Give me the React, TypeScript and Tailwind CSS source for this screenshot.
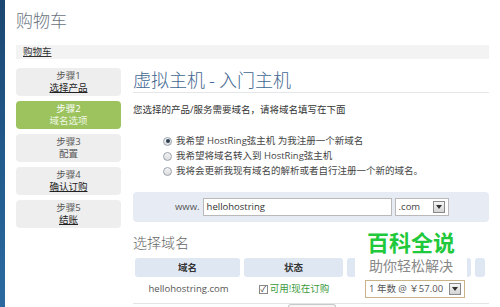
const FONT = { fontFamily: '"Open Sans", "Noto Sans CJK SC", sans-serif' };
const CJK = { fontFamily: '"Noto Sans CJK SC", sans-serif' };

const steps = [
  { n: "步骤1", label: "选择产品", link: true },
  { n: "步骤2", label: "域名选项", active: true },
  { n: "步骤3", label: "配置" },
  { n: "步骤4", label: "确认订购", link: true },
  { n: "步骤5", label: "结账", link: true },
];

function Radio({ checked }: { checked?: boolean }) {
  return (
    <span className="flex h-[9px] w-[9px] shrink-0 items-center justify-center rounded-full border border-[#9aa3ad] bg-gradient-to-b from-[#f4f4f4] to-[#dcdcdc]">
      {checked && <span className="h-[4px] w-[4px] rounded-full bg-[#2d3f55]" />}
    </span>
  );
}

function DropArrow() {
  return (
    <span className="flex h-[12px] w-[12px] shrink-0 items-center justify-center border border-[#8a8a8a] bg-gradient-to-b from-[#f6f6f6] to-[#d4d4d4]">
      <svg width="6" height="4" viewBox="0 0 6 4">
        <path d="M0 0h6L3 4z" fill="#333" />
      </svg>
    </span>
  );
}

export default function App() {
  return (
    <div className="flex h-[307px] w-[500px] overflow-hidden bg-white text-[#333]" style={FONT}>
      <div className="w-[5px] shrink-0 bg-gradient-to-b from-[#1b4670] via-[#215a8c] to-[#2a6aa0]" />
      <div className="flex w-[495px] flex-col bg-white pl-[11px] pr-[11px]">
        <div className="pt-[9px] text-[17px] font-light leading-[22px] text-[#68737e]" style={CJK}>购物车</div>
        <div className="mt-[6px] h-px bg-[#e6e8ea]" />
        <div className="mt-[8px] flex h-[25px] items-center bg-[#f3f3f3] pl-[7px]">
          <span className="text-[9.5px] text-[#333] underline">购物车</span>
        </div>
        <div className="mt-[8px] flex gap-[12px]">
          <div className="flex w-[105px] shrink-0 flex-col gap-[5px] pt-[1px]">
            {steps.map((s) => (
              <div
                key={s.n}
                className={
                  s.active
                    ? "flex h-[28px] flex-col items-center justify-center rounded-[4px] bg-[#9cc35e] text-[9.5px] leading-[12px] text-white"
                    : "flex h-[28px] flex-col items-center justify-center rounded-[4px] bg-[#eeeeee] text-[9.5px] leading-[12px] text-[#555]"
                }
              >
                <span>{s.n}</span>
                <span className={s.link ? "text-[#222] underline" : s.active ? "text-[#eef6e2]" : ""}>{s.label}</span>
              </div>
            ))}
          </div>
          <div className="flex min-w-0 flex-1 flex-col">
            <div className="pt-[1px] text-[18px] font-light leading-[23px] text-[#3f6791]" style={CJK}>虚拟主机 - 入门主机</div>
            <div className="mt-[1px] h-px bg-[#e4e6e8]" />
            <div className="mt-[11px] text-[9.5px] leading-[12px] text-[#333]">您选择的产品/服务需要域名，请将域名填写在下面</div>
            <div className="mt-[19px] flex flex-col gap-[3px] pl-[30px] text-[9.5px] leading-[12px] text-[#444]">
              <label className="flex items-center gap-[4px]">
                <Radio checked />
                <span>我希望 HostRing弦主机 为我注册一个新域名</span>
              </label>
              <label className="flex items-center gap-[4px]">
                <Radio />
                <span>我希望将域名转入到 HostRing弦主机</span>
              </label>
              <label className="flex items-center gap-[4px]">
                <Radio />
                <span>我将会更新我现有域名的解析或者自行注册一个新的域名。</span>
              </label>
            </div>
            <div className="mt-[15px] flex h-[30px] items-center rounded-[4px] bg-[#e6ebf4] pl-[42px]">
              <span className="text-[9.5px] text-[#555]">www.</span>
              <div className="ml-[3px] flex h-[18px] w-[189px] items-center border border-[#b9b9b9] bg-white pl-[3px] text-[9.5px] text-[#333]">
                hellohostring
              </div>
              <div className="ml-[3px] flex h-[18px] w-[54px] items-center justify-between border border-[#b9b9b9] bg-white pl-[3px] pr-[3px] text-[9.5px] text-[#444]">
                <span>.com</span>
                <DropArrow />
              </div>
            </div>
            <div className="mt-[11px] text-[14px] font-light leading-[18px] text-[#666]" style={CJK}>选择域名</div>
            <div className="relative mt-[7px]">
              <div className="grid grid-cols-[105px_99px_124px_10px] gap-x-[4px] pl-[2px] text-[9.5px]">
                <div className="flex h-[19px] items-center justify-center rounded-[3px] bg-[#dfe7f3] font-bold text-[#333]">域名</div>
                <div className="flex h-[19px] items-center justify-center rounded-[3px] bg-[#dfe7f3] font-bold text-[#333]">状态</div>
                <div className="h-[19px] rounded-[3px] bg-[#dfe7f3]" />
                <div className="h-[19px] rounded-[3px] bg-[#dfe7f3]" />
              </div>
              <div className="mt-[1px] flex h-[22px] items-center text-[9.5px]">
                <div className="w-[109px] pl-[2px] text-center text-[#555]">hellohostring.com</div>
                <div className="flex w-[104px] items-center justify-center gap-[2px] text-[#3b9a3b]">
                  <span className="flex h-[9px] w-[9px] items-center justify-center border border-[#888] bg-white text-[8px] leading-none text-[#333]">✓</span>
                  <span>可用!现在订购</span>
                </div>
                <div className="ml-[19px] flex h-[18px] w-[100px] items-center justify-between border border-[#c9b48a] bg-white pl-[3px] pr-[3px] text-[9.5px] text-[#555]">
                  <span className="whitespace-nowrap">1 年数 @ ￥57.00</span>
                  <DropArrow />
                </div>
              </div>
              <div className="mt-[3px] h-px bg-[#e2e4e6]" />
              <div className="ml-[155px] h-[6px] w-[48px] rounded-t-[3px] border border-b-0 border-[#c8c8c8] bg-[#f6f6f6]" />
              <div className="absolute left-[222px] top-[-29px] flex h-[49px] w-[112px] flex-col items-center gap-[3px] bg-white">
                <span className="text-[22px] font-bold leading-[25px] text-[#1fc93b]" style={CJK}>
                  百科全说
                </span>
                <span className="text-[14px] leading-[17px] text-[#888]" style={CJK}>
                  助你轻松解决
                </span>
              </div>
            </div>
          </div>
        </div>
      </div>
    </div>
  );
}
